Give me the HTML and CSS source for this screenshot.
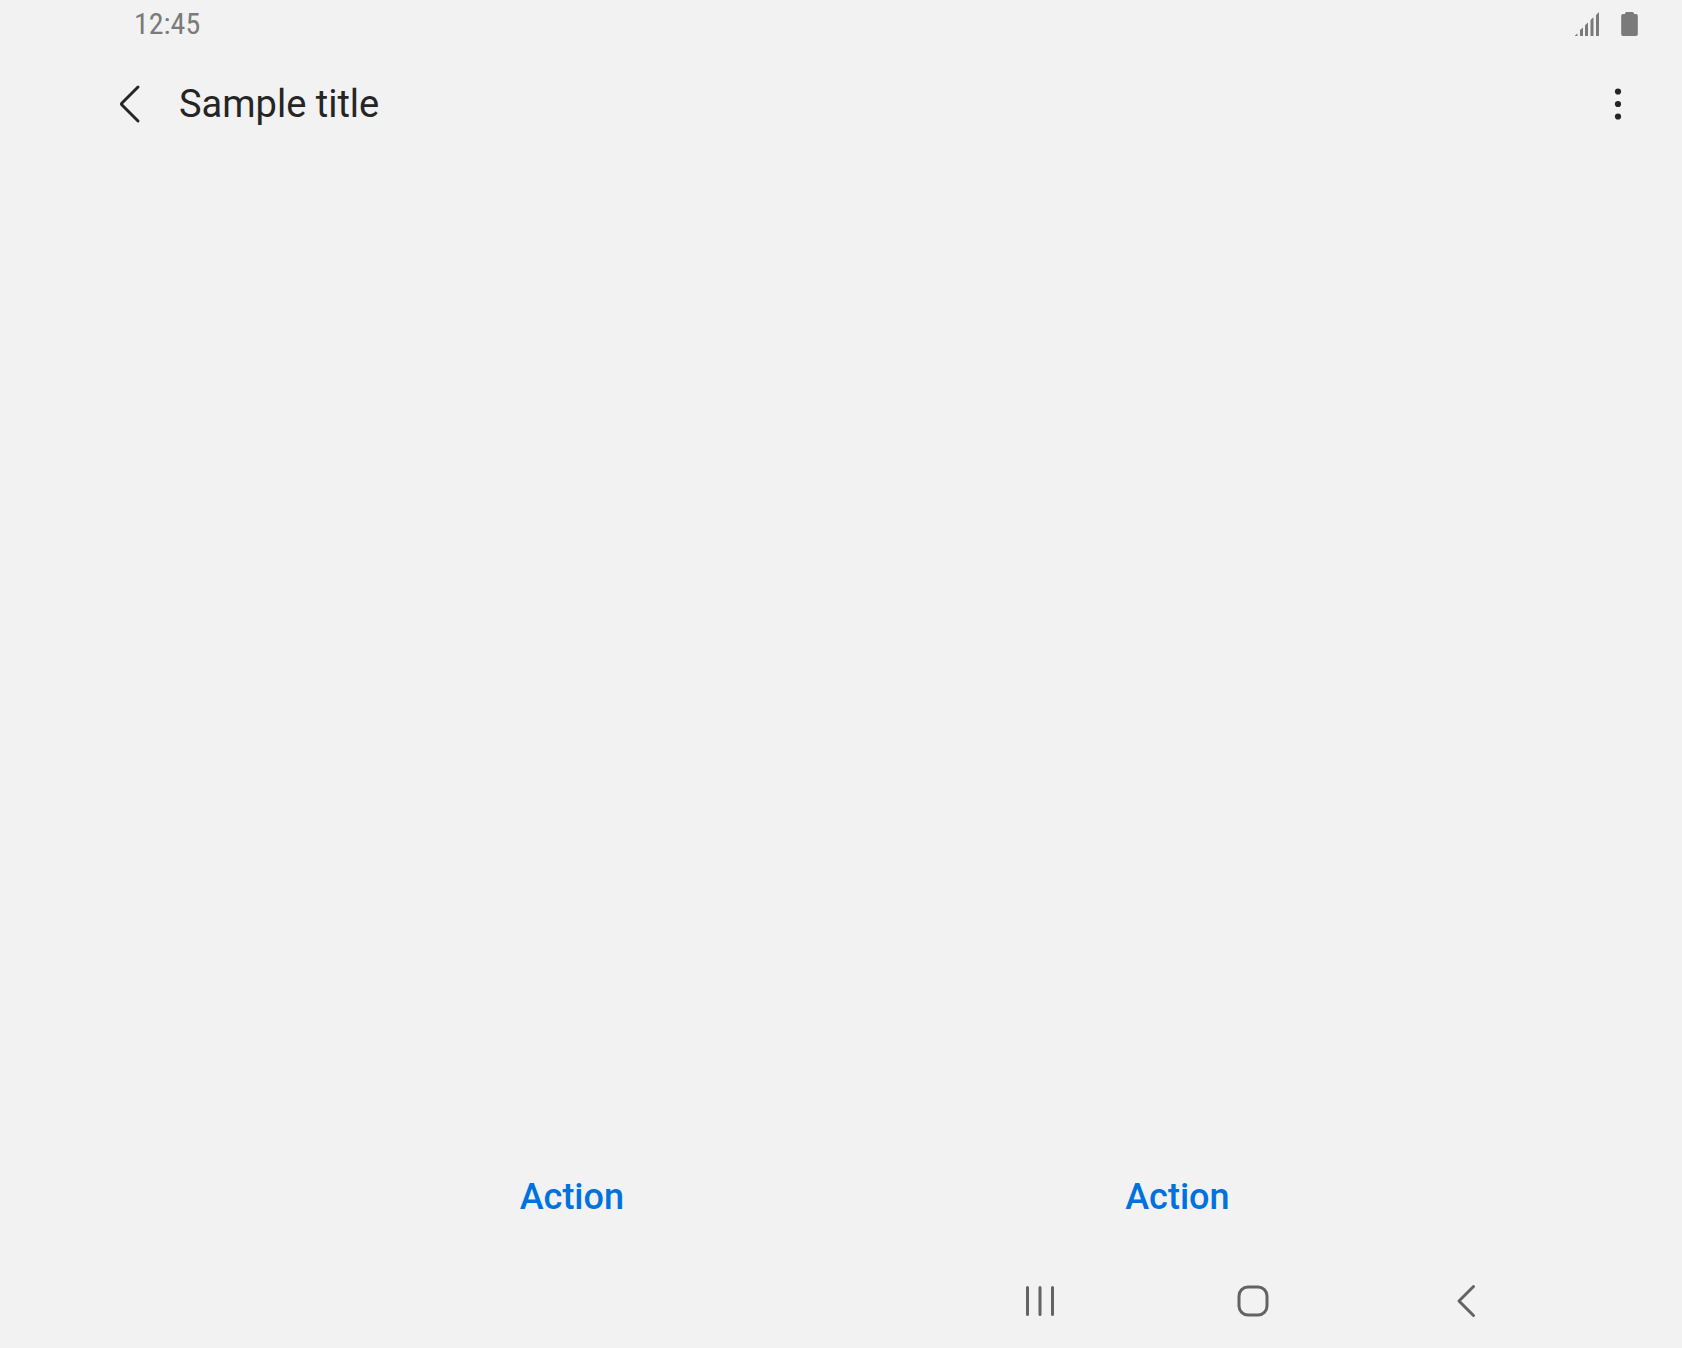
FILE: index.html
```html
<!DOCTYPE html>
<html lang="en">
<head>
<meta charset="utf-8">
<meta name="viewport" content="width=device-width, initial-scale=1">
<title>Sample title</title>
<link rel="stylesheet" href="styles.css">
</head>
<body>
<div class="status-bar">
  <time class="clock">12:45</time>
  <div class="status-icons">
    <svg class="signal" width="24" height="24" viewBox="0 0 24 24" aria-hidden="true">
      <path d="M0 24v-.4L2.5 21.5V24zM5 24v-6L8 15.500V24zM10 24V13.200L13 10.400V24zM15.500 24V8L18.500 5.200V24zM21 24V3L24 0V24z"/>
    </svg>
    <svg class="battery" width="17" height="24" viewBox="0 0 17 24" aria-hidden="true">
      <path d="M5.500 0h6a1.500 1.500 0 0 1 1.500 1.500V2h2a1.800 1.800 0 0 1 1.800 1.800v18.400A1.800 1.800 0 0 1 15 24H2A1.800 1.800 0 0 1 .2 22.200V3.800A1.800 1.800 0 0 1 2 2h2v-.5A1.500 1.500 0 0 1 5.500 0z"/>
    </svg>
  </div>
</div>
<header class="app-bar">
  <button class="icon-button" type="button" aria-label="Navigate up">
    <svg width="48" height="48" viewBox="0 0 48 48" aria-hidden="true">
      <path class="stroke" d="M33 7L17 23Q16 24 17 25L33 41"/>
    </svg>
  </button>
  <h1 class="title">Sample title</h1>
  <button class="icon-button" type="button" aria-label="More options">
    <svg width="48" height="48" viewBox="0 0 48 48" aria-hidden="true">
      <circle cx="24" cy="11.500" r="3.100"/><circle cx="24" cy="24" r="3.100"/><circle cx="24" cy="36.500" r="3.100"/>
    </svg>
  </button>
</header>
<main class="content"></main>
<footer class="actions">
  <button class="action" type="button">Action</button>
  <button class="action" type="button">Action</button>
</footer>
<nav class="nav-bar" aria-label="System navigation">
  <button class="icon-button" type="button" aria-label="Recents">
    <svg width="48" height="48" viewBox="0 0 48 48" aria-hidden="true">
      <path class="stroke" d="M11.500 10.500v27M24 10.500v27M36.500 10.500v27"/>
    </svg>
  </button>
  <button class="icon-button" type="button" aria-label="Home">
    <svg width="48" height="48" viewBox="0 0 48 48" aria-hidden="true">
      <rect class="stroke" x="10" y="10" width="28" height="28" rx="9"/>
    </svg>
  </button>
  <button class="icon-button" type="button" aria-label="Back">
    <svg width="48" height="48" viewBox="0 0 48 48" aria-hidden="true">
      <path class="stroke" d="M31.500 9.500L17 24L31.500 38.500"/>
    </svg>
  </button>
</nav>
</body>
</html>
```
FILE: styles.css
```css
* {
  box-sizing: border-box;
}

body {
  margin: 0;
  min-height: 100vh;
  display: flex;
  flex-direction: column;
  background: #f2f2f2;
  color: #252525;
  font-family: Roboto, "Liberation Sans", sans-serif;
}

button {
  margin: 0;
  padding: 0;
  border: 0;
  background: none;
  color: inherit;
  font: inherit;
  cursor: pointer;
}

svg {
  display: block;
  fill: currentColor;
}

.stroke {
  fill: none;
  stroke: currentColor;
  stroke-width: 3;
  stroke-linecap: round;
  stroke-linejoin: round;
}

.status-bar {
  display: flex;
  align-items: center;
  justify-content: space-between;
  height: 48px;
  padding: 0 44px 0 134px;
  color: #7a7a7a;
}

.clock {
  font-family: "Roboto Condensed", Roboto, sans-serif;
  font-size: 30px;
  line-height: 48px;
}

.status-icons {
  display: flex;
  gap: 22px;
}

.app-bar {
  display: flex;
  align-items: center;
  height: 112px;
  padding: 0 40px 0 105px;
}

.title {
  flex: 1;
  margin: 0 0 0 26px;
  font-size: 38px;
  font-weight: 400;
  line-height: 46px;
}

.content {
  flex: 1;
}

.actions {
  display: grid;
  grid-template-columns: 1fr 1fr;
  height: 112px;
  padding: 0 12% 0 16%;
}

.action {
  color: #0072de;
  font-size: 36px;
  font-weight: 500;
  line-height: 48px;
}

.nav-bar {
  display: grid;
  grid-template-columns: repeat(3, 1fr);
  justify-items: center;
  align-items: center;
  width: 38%;
  height: 95px;
  margin: 0 109px 0 auto;
  color: #636363;
}
```
